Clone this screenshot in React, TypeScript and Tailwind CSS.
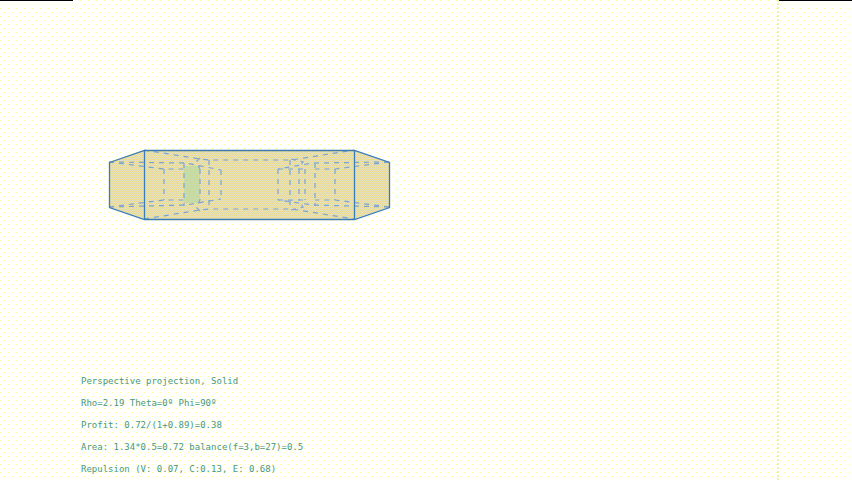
const readouts = [
  'Perspective projection, Solid',
  'Rho=2.19 Theta=0º Phi=90º',
  'Profit: 0.72/(1+0.89)=0.38',
  'Area: 1.34*0.5=0.72 balance(f=3,b=27)=0.5',
  'Repulsion (V: 0.07, C:0.13, E: 0.68)',
];

// Edges hidden behind the faces of the solid, drawn dashed.
const hiddenEdges = [
  'M36 1L92 10L101 11H183L190 10L246 1',
  'M36 70L92 61L101 60H183L190 61L246 70',
  'M1 13L56 20H78',
  'M1 13L78 14L113 21',
  'M1 58L56 51H78',
  'M1 58L78 56L113 50',
  'M56 20V51M76 14V57M92 20V51M101 11V60M113 21V50',
  'M92 9L88 13L92 20M92 62L88 58L92 51',
  'M281 13L227 20H207',
  'M281 13L205 14L170 20',
  'M281 58L227 51H207',
  'M281 58L205 56L170 51',
  'M170 20V51M182 11V60M191 20V51M197 20V51M207 14V57M227 20V51',
  'M170 20H197M170 51H197',
  'M183 10L195 13L191 20M183 61L195 58L191 51',
];

function Solid() {
  return (
    <svg viewBox="0 0 283 72" className="block h-[72px] w-[283px]" fill="none" role="img" aria-label="Solid">
      <defs>
        <pattern id="face" width="2" height="2" patternUnits="userSpaceOnUse">
          <rect width="2" height="2" fill="#e4e2c4" shapeRendering="crispEdges" />
          <rect width="1" height="1" fill="#ead98c" shapeRendering="crispEdges" />
          <rect x="1" y="1" width="1" height="1" fill="#c9dbe6" shapeRendering="crispEdges" />
        </pattern>
      </defs>
      <path d="M1 13L36 1H246L281 13V58L246 70H36L1 58Z" fill="url(#face)" />
      <path d="M76 17H92V54H76Z" fill="#b2d8a2" fillOpacity=".6" />
      <g stroke="#7ba4d2" strokeWidth="1.2" strokeDasharray="5 5">
        {hiddenEdges.map((d) => (
          <path key={d} d={d} />
        ))}
      </g>
      <path
        d="M1.5 13.5L36.5 1.5H246.5L281.5 13.5V58.5L246.5 70.5H36.5L1.5 58.5ZM36.5 1.5V70.5M246.5 1.5V70.5"
        stroke="#3c7cb4"
        strokeWidth="1.3"
      />
    </svg>
  );
}

export default function App() {
  return (
    <main className="relative flex min-h-screen overflow-hidden bg-[#fefefc]">
      <svg className="absolute inset-0 h-full w-full" aria-hidden="true">
        <defs>
          <pattern id="dots" width="8" height="8" patternUnits="userSpaceOnUse">
            <rect width="1" height="1" fill="#ffffa0" />
            <rect x="4" y="4" width="1" height="1" fill="#ffffa0" />
          </pattern>
        </defs>
        <rect width="100%" height="100%" fill="url(#dots)" />
      </svg>
      <div className="relative h-px w-[73px] shrink-0 bg-black" />
      <section className="relative flex grow flex-col border-r-2 border-dotted border-[#eeeeb8] pt-[149px] pl-2">
        <div className="pl-[27px]">
          <Solid />
        </div>
        <div className="mt-[149px] font-['DejaVu_Sans_Mono','Liberation_Mono',monospace] text-[9px] leading-[22px] whitespace-nowrap text-[#48987f]">
          {readouts.map((line) => (
            <p key={line}>{line}</p>
          ))}
        </div>
      </section>
      <div className="relative h-px w-[73px] shrink-0 bg-black" />
    </main>
  );
}
